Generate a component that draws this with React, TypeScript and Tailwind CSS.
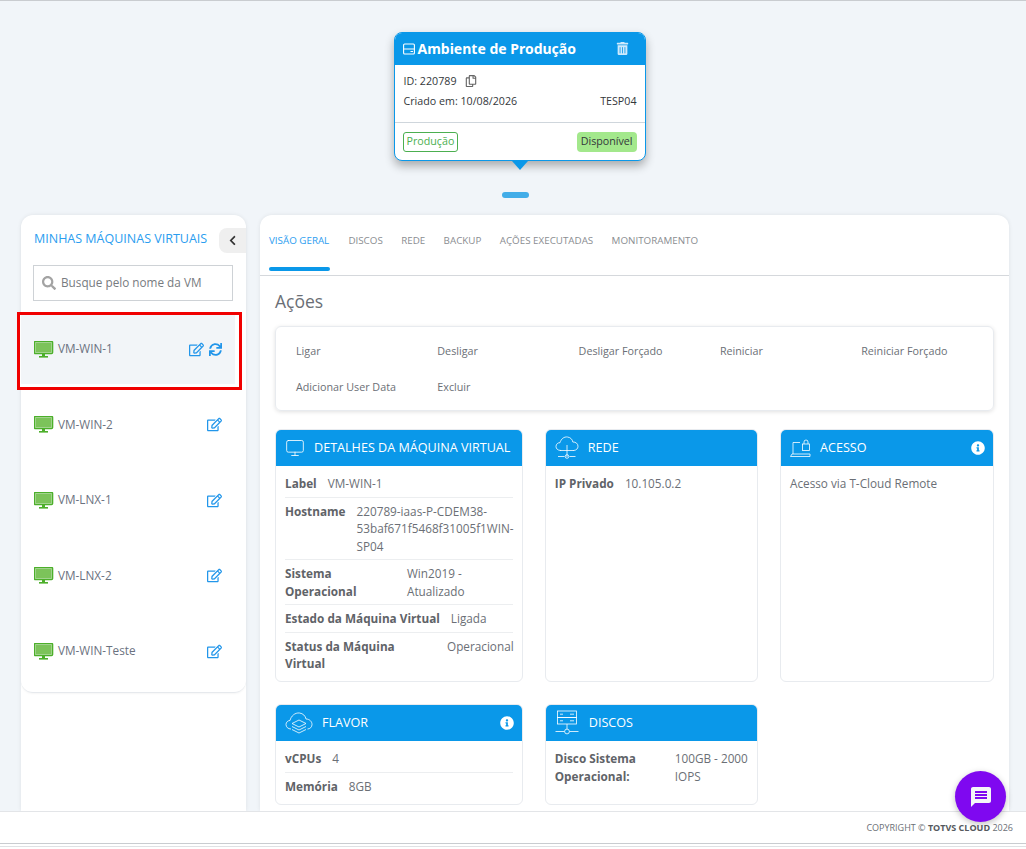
import { Monitor } from "lucide-react";
import { FaChevronLeft, FaInfoCircle, FaRegCopy, FaRegEdit, FaSearch, FaSync, FaTrashAlt } from "react-icons/fa";
import { MdMessage } from "react-icons/md";
import type { ReactNode } from "react";

const font = { fontFamily: '"Open Sans", "Noto Sans", sans-serif' };

function DesktopIcon() {
  return (
    <svg width="20" height="17" viewBox="0 0 20 17" className="shrink-0">
      <rect x="0.5" y="0.5" width="18" height="12" rx="1" fill="#f2f5f8" stroke="#4caf2a" strokeWidth="1.6" />
      <rect x="1.5" y="1.5" width="16" height="10" fill="#7cc35a" />
      <rect x="8" y="13" width="3" height="2" fill="#4caf2a" />
      <rect x="5" y="15" width="9" height="1.6" fill="#4caf2a" />
    </svg>
  );
}

function HddIcon() {
  return (
    <svg width="12" height="12" viewBox="0 0 12 12" fill="none" stroke="white" strokeWidth="1.1" className="shrink-0">
      <rect x="0.6" y="1" width="10.8" height="10" rx="1" />
      <path d="M0.6 6h10.8" />
      <path d="M7.5 8.5h2.5" />
    </svg>
  );
}

function MonitorLine() {
  return <Monitor size={20} strokeWidth={1} color="white" className="shrink-0" />;
}

function CloudNet() {
  return (
    <svg width="24" height="26" viewBox="0 0 24 26" fill="none" stroke="white" strokeWidth="0.8" className="shrink-0">
      <path d="M6 15.5C2.5 15.5 1 13.5 1 11.5c0-2.4 2-4 4-3.8C6 4 9 1.500 12.500 2c3 .4 5 2.500 5.300 5 3-.2 5.200 1.800 5.200 4.300 0 2.200-1.700 4.200-4.500 4.200" />
      <path d="M12 10v12M5 15.500h14M3 21.500h6.500M14.500 21.500h6" />
      <circle cx="12" cy="21.500" r="1.800" />
    </svg>
  );
}

function LaptopLock() {
  return (
    <svg width="21" height="19" viewBox="0 0 21 19" fill="none" stroke="white" strokeWidth="0.8" className="shrink-0">
      <path d="M3 15V3.500h7M2 15l-1.500 2.500h19.500v-2.500H2z" />
      <rect x="12.500" y="5" width="7" height="6.500" />
      <path d="M14 5V3a2 2 0 0 1 4 0v2" />
    </svg>
  );
}

function CloudStack() {
  return (
    <svg width="28" height="24" viewBox="0 0 28 24" fill="none" stroke="white" strokeWidth="0.8" className="shrink-0">
      <path d="M6 18C3 18 1 16 1 13.500c0-2.200 1.800-4 4-4C6 5 10 1.500 14.500 2c3.500.4 6 3 6.500 6 3.500 0 6 2.500 6 5.500 0 2.500-2 4.500-4.500 4.500" />
      <path d="M14 9l7 3.500-7 3.500-7-3.500 7-3.500z" />
      <path d="M7 15.500l7 3.500 7-3.500M7 18.500l7 3.500 7-3.500" />
    </svg>
  );
}

function ServerNet() {
  return (
    <svg width="24" height="26" viewBox="0 0 24 26" fill="none" stroke="white" strokeWidth="0.8" className="shrink-0">
      <rect x="2.500" y="1" width="19" height="6.500" />
      <rect x="2.500" y="7.500" width="19" height="6.500" />
      <path d="M5 4.200h3M15 4.200h4M5 10.800h3M15 10.800h4M12 14v5M0.500 21.500h9M14.500 21.500h9" />
      <circle cx="12" cy="21.500" r="2.400" />
    </svg>
  );
}

function InfoDot() {
  return (
    <span className="flex h-[14px] w-[14px] items-center justify-center rounded-full bg-[#0a98e9]">
      <FaInfoCircle size={14} color="white" />
    </span>
  );
}

function VmRow({ name, active }: { name: string; active?: boolean }) {
  return (
    <div className="relative flex h-[75.500px] items-center pl-[13px] pr-[24px]">
      {active && (
        <div className="absolute left-[-4px] right-[4px] top-[1px] h-[78px] border-[3px] border-[#f00000] bg-white pb-[3px] pl-[1px] pr-[4px]">
          <div className="h-full bg-[#f2f5f8]" />
        </div>
      )}
      <div className="relative flex w-full items-center gap-[4px] pt-[1px]">
        <DesktopIcon />
        <span className="flex-1 text-[11.750px] text-[#6b7280]">{name}</span>
        <FaRegEdit size={15} color="#2296ea" />
        {active && <FaSync size={13} color="#2296ea" className="ml-[1px]" />}
      </div>
    </div>
  );
}

function InfoCard({
  title,
  icon,
  info,
  iconBox,
  className,
  children,
}: {
  title: string;
  icon: ReactNode;
  info?: boolean;
  iconBox: string;
  className?: string;
  children: ReactNode;
}) {
  return (
    <div className={`overflow-hidden rounded-md border border-[#e8ebef] bg-white ${className ?? ""}`}>
      <div className="flex h-[36px] items-center bg-[#0a98e9] pl-[9px] pr-[8px]">
        <div className={`shrink-0 ${iconBox}`}>{icon}</div>
        <span className="flex-1 whitespace-nowrap text-[12.600px] text-white">{title}</span>
        {info && <InfoDot />}
      </div>
      <div className="px-[9px] pt-[4px] text-[11.750px] leading-[17.500px] text-[#6b6f76]">{children}</div>
    </div>
  );
}

function Field({ label, children, last }: { label: ReactNode; children: ReactNode; last?: boolean }) {
  return (
    <div className={`flex items-start gap-[11px] pb-[4px] pt-[5px] ${last ? "" : "border-b border-[#eceef0]"}`}>
      <b className="font-bold text-[#5f6368]">{label}</b>
      <div className="min-w-0">{children}</div>
    </div>
  );
}

const tabs = ["DISCOS", "REDE", "BACKUP", "AÇÕES EXECUTADAS", "MONITORAMENTO"];
const acoes = ["Ligar", "Desligar", "Desligar Forçado", "Reiniciar", "Reiniciar Forçado", "Adicionar User Data", "Excluir"];

export default function App() {
  return (
    <div style={font} className="relative flex h-[849px] w-[1026px] flex-col overflow-hidden border-t border-[#c9ccd0] bg-[#f1f5f9]">
      <div className="flex min-h-0 flex-1 flex-col">
        {/* ambiente card */}
        <div className="flex flex-col items-center pl-[13px] pt-[31px]">
          <div className="w-[252px] overflow-hidden rounded-lg border border-[#0a98e9] bg-white shadow-[0_5px_10px_rgba(0,0,0,0.3)]">
            <div className="flex h-[32px] items-center gap-[3px] bg-[#0a98e9] pb-[1px] pl-[8px] pr-[16px]">
              <HddIcon />
              <span className="flex-1 font-['Noto_Sans'] text-[14px] font-bold text-white">Ambiente de Produção</span>
              <FaTrashAlt size={13} color="#cfeafc" />
            </div>
            <div className="border-b border-[#cfd6dc] pb-[11px] pl-[9px] pr-[8px] pt-[6px] text-[10.700px] text-[#33373b]">
              <div className="flex h-[20px] items-center gap-[8px]">
                ID: 220789 <FaRegCopy size={12} color="#666" />
              </div>
              <div className="flex h-[20px] items-center justify-between">
                <span>Criado em: 10/08/2026</span>
                <span>TESP04</span>
              </div>
            </div>
            <div className="flex h-[37px] items-center justify-between px-[8px] text-[10.700px]">
              <span className="flex h-[20px] items-center rounded-[3px] border border-[#4caf50] px-[3px] text-[#4caf50]">Produção</span>
              <span className="flex h-[20px] items-center rounded-[4px] bg-[#a3e88c] px-[4px] text-[#33373b]">Disponível</span>
            </div>
          </div>
          <div className="h-0 w-0 border-x-[8px] border-t-[9px] border-x-transparent border-t-[#0a98e9]" />
          <div className="ml-[-8px] mt-[22px] h-[6px] w-[27px] rounded-full bg-[#42ade8]" />
        </div>

        <div className="mt-[17px] flex min-h-0 flex-1 items-stretch gap-[14px] pl-[21px] pr-[17px]">
          {/* sidebar */}
          <aside className="w-[225px] shrink-0 rounded-t-xl bg-white shadow-[0_0_4px_rgba(0,0,0,0.08)]">
            <div className="rounded-xl border-b border-[#e6e9ed] pb-[3px] shadow-[0_1px_2px_rgba(0,0,0,0.04)]">
              <div className="flex h-[50px] items-center pl-[13px]">
                <span className="flex-1 pb-[2px] text-[12.500px] text-[#2a9df0]">MINHAS MÁQUINAS VIRTUAIS</span>
                <span className="flex h-[25px] w-[27px] items-center justify-center rounded-l-lg bg-[#efefef]">
                  <FaChevronLeft size={11} color="#333" />
                </span>
              </div>
              <div className="ml-[12px] mr-[13px] flex h-[36px] items-center gap-[5px] border border-[#ced2d6] pl-[8px]">
                <FaSearch size={14} color="#a3a3a3" />
                <span className="text-[11.750px] text-[#777b80]">Busque pelo nome da VM</span>
              </div>
              <div className="mt-[10px]">
                <VmRow name="VM-WIN-1" active />
                <VmRow name="VM-WIN-2" />
                <VmRow name="VM-LNX-1" />
                <VmRow name="VM-LNX-2" />
                <VmRow name="VM-WIN-Teste" />
              </div>
            </div>
          </aside>

          {/* main */}
          <main className="min-w-0 flex-1 rounded-t-xl bg-white shadow-[0_0_4px_rgba(0,0,0,0.08)]">
            <div className="flex h-[61px] items-start gap-[18.400px] border-b border-[#d5d8dc] pl-[9px] text-[9.800px] text-[#8a8d91]">
              <div className="flex h-[56px] flex-col justify-between border-b-[4px] border-transparent pt-[19px]">
                <span className="text-[#2a9df0]">VISÃO GERAL</span>
                <span className="mb-[-4px] h-[4px] w-[61px] rounded-full bg-[#0a98e9]" />
              </div>
              {tabs.map((t) => (
                <span key={t} className="pt-[19px]">{t}</span>
              ))}
            </div>
            <div className="px-[15px]">
              <h2 className="mt-[13px] text-[17.500px] leading-[24px] text-[#6b6f76]">Ações</h2>
              <div className="mt-[13px] grid h-[85px] grid-cols-[141.300px_141.300px_141.300px_141.300px_1fr] content-start gap-y-[18px] rounded-md border border-[#e8ebef] pl-[20px] pt-[15px] text-[10.750px] leading-[18px] text-[#6b6f76] shadow-[0_1px_4px_rgba(0,0,0,0.12)]">
                {acoes.map((a) => (
                  <span key={a}>{a}</span>
                ))}
              </div>

              <div className="mt-[18px] grid grid-cols-[248px_213.500px_214px] gap-x-[21.750px] gap-y-[22px]">
                <InfoCard title="DETALHES DA MÁQUINA VIRTUAL" icon={<MonitorLine />} iconBox="w-[29px]" className="h-[253px]">
                  <Field label="Label">VM-WIN-1</Field>
                  <Field label="Hostname">220789-iaas-P-CDEM38-53baf671f5468f31005f1WIN-SP04</Field>
                  <Field label={<span className="block w-[111px]">Sistema Operacional</span>}>Win2019 - Atualizado</Field>
                  <Field label="Estado da Máquina Virtual">Ligada</Field>
                  <Field last label={<span className="block w-[151px] pr-[30px]">Status da Máquina Virtual</span>}>Operacional</Field>
                </InfoCard>
                <InfoCard title="REDE" icon={<CloudNet />} iconBox="w-[33px]" className="h-[253px]">
                  <Field last label="IP Privado">10.105.0.2</Field>
                </InfoCard>
                <InfoCard title="ACESSO" icon={<LaptopLock />} iconBox="w-[30px]" info className="h-[253px]">
                  <div className="py-[5px]">Acesso via T-Cloud Remote</div>
                </InfoCard>
                <InfoCard title="FLAVOR" icon={<CloudStack />} iconBox="w-[37px]" info className="h-[101px]">
                  <Field label="vCPUs">4</Field>
                  <Field last label="Memória">8GB</Field>
                </InfoCard>
                <InfoCard title="DISCOS" icon={<ServerNet />} iconBox="w-[34px]" className="h-[101px]">
                  <Field last label={<span className="block w-[109px]">Disco Sistema Operacional:</span>}>
                    <span className="block w-[76px]">100GB - 2000 IOPS</span>
                  </Field>
                </InfoCard>
              </div>
            </div>
          </main>
        </div>
      </div>

      <footer className="flex h-[32px] shrink-0 items-center justify-end border-t border-[#e3e5e8] bg-white pr-[13px] text-[9px] text-[#6b6f76]">
        <span>COPYRIGHT © <b className="text-[#55595e]">TOTVS CLOUD</b> 2026</span>
      </footer>
      <div className="h-[3px] shrink-0 border-t border-[#c9ccd0] bg-white" />
      <div className="h-[3px] shrink-0 border-t border-[#dfe1e4] bg-white" />

      {/* chat */}
      <div className="absolute left-[955px] top-[770px] flex h-[51px] w-[51px] items-center justify-center rounded-full bg-[#7f08f0] shadow-[0_2px_6px_rgba(0,0,0,0.25)]">
        <MdMessage size={24} color="#f4f6f8" />
      </div>
    </div>
  );
}
